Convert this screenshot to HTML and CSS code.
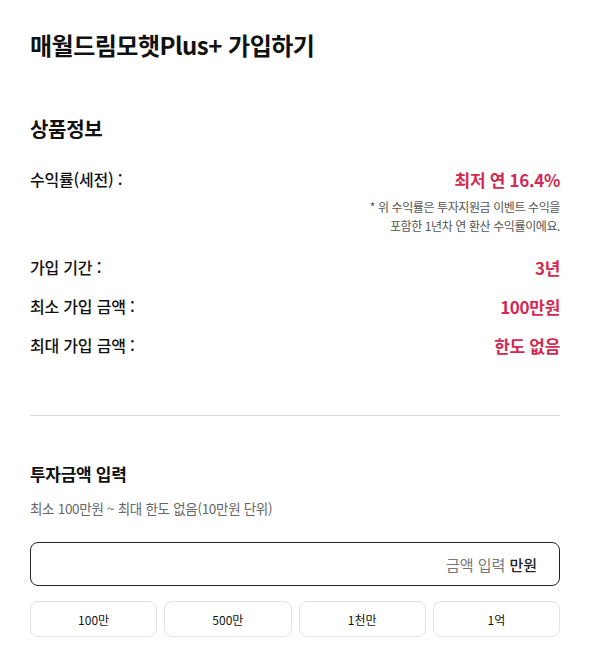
FILE: index.html
```html
<!DOCTYPE html>
<html lang="ko">
<head>
    <meta charset="UTF-8">
    <meta name="viewport" content="width=device-width, initial-scale=1.0">
    <title>매월드림모햇Plus+ 가입하기</title>
    <link rel="stylesheet" href="styles.css">
</head>
<body>
    <div class="page">
        <h1 class="page-title">매월드림모햇Plus+ 가입하기</h1>

        <section class="product">
            <h2 class="section-title">상품정보</h2>

            <div class="info-row">
                <span class="info-label">수익률(세전) :</span>
                <span class="info-value">최저 연 16.4%</span>
            </div>
            <p class="info-note">* 위 수익률은 투자지원금 이벤트 수익을<br>포함한 1년차 연 환산 수익률이에요.</p>

            <div class="info-row">
                <span class="info-label">가입 기간 :</span>
                <span class="info-value">3년</span>
            </div>
            <div class="info-row">
                <span class="info-label">최소 가입 금액 :</span>
                <span class="info-value">100만원</span>
            </div>
            <div class="info-row">
                <span class="info-label">최대 가입 금액 :</span>
                <span class="info-value">한도 없음</span>
            </div>
        </section>

        <hr class="divider">

        <section class="invest">
            <h2 class="invest-title">투자금액 입력</h2>
            <p class="invest-hint">최소 100만원 ~ 최대 한도 없음(10만원 단위)</p>

            <div class="amount-box">
                <input type="text" class="amount-input" placeholder="금액 입력">
                <span class="amount-unit">만원</span>
            </div>

            <div class="quick-buttons">
                <button class="quick-btn">100만</button>
                <button class="quick-btn">500만</button>
                <button class="quick-btn">1천만</button>
                <button class="quick-btn">1억</button>
            </div>
        </section>
    </div>
</body>
</html>
```

FILE: styles.css
```css
body {
    margin: 0;
    font-family: 'Noto Sans CJK KR', 'Noto Sans', sans-serif;
    color: #111;
    background: #fff;
}

.page {
    width: 530px;
    padding: 0 0 0 30px;
}

.page-title {
    margin: 30px 0 0;
    font-size: 24px;
    line-height: 30px;
    font-weight: 700;
    letter-spacing: -0.5px;
}

.product {
    margin-top: 55px;
}

.section-title {
    margin: 0 0 24px;
    font-size: 20px;
    line-height: 28px;
    font-weight: 700;
    letter-spacing: -0.3px;
}

.info-row {
    display: flex;
    justify-content: space-between;
    align-items: center;
    height: 24px;
    margin-bottom: 15px;
}

.info-label {
    font-size: 16px;
    font-weight: 500;
    letter-spacing: -0.2px;
}

.info-value {
    font-size: 17px;
    font-weight: 700;
    color: #d22a52;
    letter-spacing: -0.3px;
}

.info-note {
    margin: -9px 0 20px;
    text-align: right;
    font-size: 12px;
    line-height: 19px;
    color: #555;
    letter-spacing: -0.4px;
}

.info-row:last-child {
    margin-bottom: 0;
}

.divider {
    margin: 58px 0 0;
    border: 0;
    border-top: 1px solid #d9d9d9;
}

.invest {
    margin-top: 45px;
}

.invest-title {
    margin: 0;
    font-size: 17px;
    line-height: 26px;
    font-weight: 700;
    letter-spacing: -0.3px;
}

.invest-hint {
    margin: 11px 0 0;
    font-size: 13.5px;
    line-height: 20px;
    color: #666;
    letter-spacing: -0.3px;
}

.amount-box {
    display: flex;
    align-items: center;
    height: 42px;
    margin-top: 24px;
    padding: 0 22px 0 16px;
    border: 1px solid #222;
    border-radius: 8px;
}

.amount-input {
    flex: 1;
    border: 0;
    outline: none;
    text-align: right;
    font-family: inherit;
    font-size: 15px;
    color: #111;
    background: transparent;
    padding: 0 4px 0 0;
}

.amount-input::placeholder {
    color: #777;
}

.amount-unit {
    font-size: 15px;
    font-weight: 500;
    color: #222;
}

.quick-buttons {
    display: grid;
    grid-template-columns: repeat(4, 1fr);
    gap: 7px;
    margin-top: 15px;
}

.quick-btn {
    height: 36px;
    border: 1px solid #e2e2e2;
    border-radius: 8px;
    background: #fff;
    font-family: inherit;
    font-size: 12px;
    font-weight: 400;
    color: #111;
}
```
